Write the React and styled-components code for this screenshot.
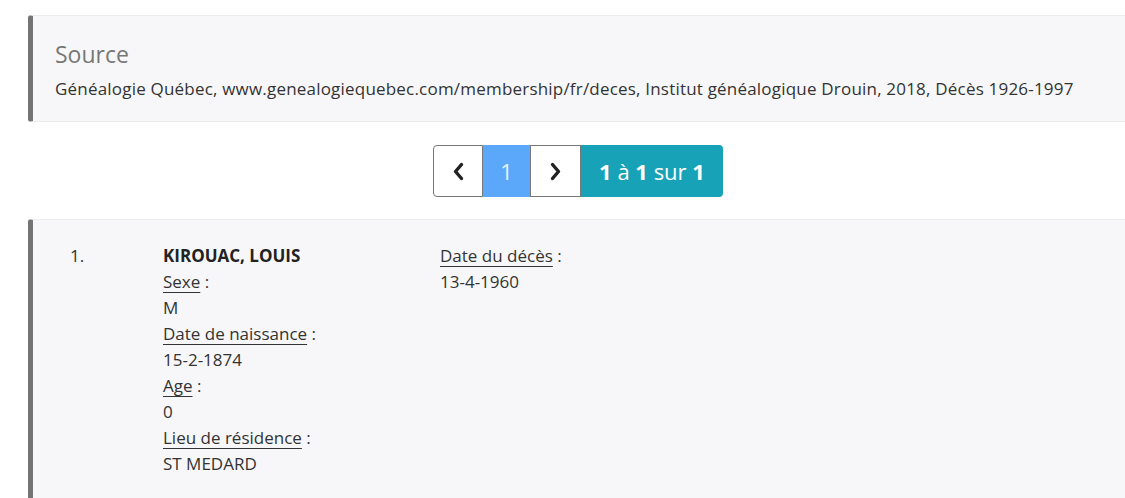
import React from "react";
import styled, { createGlobalStyle } from "styled-components";

const Global = createGlobalStyle`
  html, body { margin: 0; padding: 0; background: #fff; overflow: hidden; }
  body { font-family: "Open Sans", "Liberation Sans", sans-serif; color: #333; font-size: 17px; }
`;

const Page = styled.div`
  width: 1100px;
  margin-left: 28px;
  padding-top: 15px;
`;

const Callout = styled.div`
  background: #f7f7f9;
  border: 1px solid #ececec;
  border-left: 5px solid #747474;
  border-radius: 3px;
  padding: ${(p) => p.$pad};
  box-sizing: border-box;
  width: 1130px;
`;

const Title = styled.h4`
  margin: 0;
  font-size: 23px;
  font-weight: 400;
  line-height: 34px;
  color: #777;
`;

const SourceText = styled.p`
  margin: 6px 0 0;
  font-size: 17px;
  line-height: 23px;
  letter-spacing: 0.2px;
  color: #333;
  white-space: nowrap;
`;

const PagerRow = styled.div`
  display: flex;
  justify-content: center;
  margin: 23px 0 22px;
`;

const Pager = styled.div`
  display: flex;
  height: 52px;
`;

const PagerBtn = styled.div`
  width: ${(p) => p.$w}px;
  box-sizing: border-box;
  display: flex;
  align-items: center;
  justify-content: center;
  background: ${(p) => (p.$active ? "#5ba8fa" : "#fff")};
  color: ${(p) => (p.$active ? "#e8f3ff" : "#222")};
  border: 1px solid #777;
  border-left-width: ${(p) => (p.$first ? "1px" : "0")};
  border-color: ${(p) => (p.$active ? "#5ba8fa #777 #5ba8fa #777" : "#777")};
  border-radius: ${(p) => (p.$first ? "4px 0 0 4px" : "0")};
  font-size: 22px;
`;

const Info = styled.div`
  display: flex;
  align-items: center;
  justify-content: center;
  width: 142px;
  background: #17a2b8;
  color: #fff;
  font-size: 22px;
  border-radius: 0 4px 4px 0;
  white-space: nowrap;
  b { font-weight: 700; }
`;

const Record = styled.div`
  display: grid;
  grid-template-columns: 93px 277px 1fr;
  font-size: 17px;
  line-height: 26px;
  color: #333;
`;

const Num = styled.div``;

const Col = styled.div`
  display: flex;
  flex-direction: column;
`;

const Name = styled.div`
  font-weight: 700;
  color: #222;
`;

const Label = styled.div`
  span {
    text-decoration: underline;
    text-decoration-thickness: 1px;
    text-underline-offset: 4px;
    text-decoration-skip-ink: none;
  }
`;

const Chevron = ({ dir }) => (
  <svg width="13" height="19" viewBox="0 0 13 19">
    <polyline
      points={dir === "left" ? "9.5,2.5 3.5,9.5 9.5,16.5" : "3.5,2.5 9.5,9.5 3.5,16.5"}
      fill="none"
      stroke="#222"
      strokeWidth="3.4"
      strokeLinecap="round"
      strokeLinejoin="round"
    />
  </svg>
);

const Field = ({ label, value }) => (
  <>
    <Label>
      <span>{label}</span> :
    </Label>
    <div>{value}</div>
  </>
);

export default function App() {
  return (
    <>
      <Global />
      <Page>
        <Callout $pad="21px 20px 21px 22px">
          <Title>Source</Title>
          <SourceText>
            Généalogie Québec, www.genealogiequebec.com/membership/fr/deces, Institut généalogique Drouin, 2018, Décès 1926-1997
          </SourceText>
        </Callout>
        <PagerRow>
          <Pager>
            <PagerBtn $w={50} $first>
              <Chevron dir="left" />
            </PagerBtn>
            <PagerBtn $w={48} $active>1</PagerBtn>
            <PagerBtn $w={50}>
              <Chevron dir="right" />
            </PagerBtn>
            <Info>
              <b>1</b>&nbsp;à&nbsp;<b>1</b>&nbsp;sur&nbsp;<b>1</b>
            </Info>
          </Pager>
        </PagerRow>
        <Callout $pad="23px 20px 40px 37px">
          <Record>
            <Num>1.</Num>
            <Col>
              <Name>KIROUAC, LOUIS</Name>
              <Field label="Sexe" value="M" />
              <Field label="Date de naissance" value="15-2-1874" />
              <Field label="Age" value="0" />
              <Field label="Lieu de résidence" value="ST MEDARD" />
            </Col>
            <Col>
              <Field label="Date du décès" value="13-4-1960" />
            </Col>
          </Record>
        </Callout>
      </Page>
    </>
  );
}
